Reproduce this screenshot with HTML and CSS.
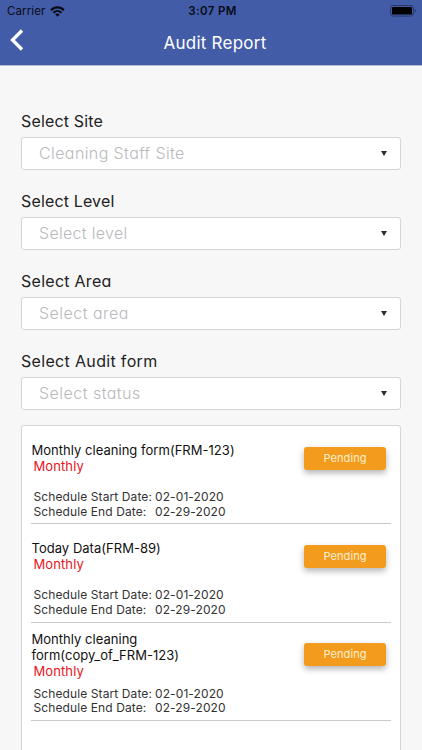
FILE: index.html
```html
<!DOCTYPE html>
<html lang="en">
<head>
<meta charset="utf-8">
<title>Audit Report</title>
<link rel="stylesheet" href="styles.css">
</head>
<body>
<header class="header">
  <div class="status">
    <div class="carrier"><span>Carrier</span>
      <svg class="wifi" width="15" height="11" viewBox="0 0 15 11"><g fill="none" stroke="#070b16" stroke-width="2.200"><path d="M1.1 4.2C4.6.5 10.4.5 13.900 4.2"/><path d="M3.5 6.7c2.3-2.3 5.7-2.3 8 0"/></g><path fill="#070b16" d="M7.5 10.7 5.2 8.400c1.3-1.2 3.3-1.2 4.6 0z"/></svg>
    </div>
    <div class="time">3:07 PM</div>
    <svg class="battery" width="27" height="12" viewBox="0 0 27 12"><rect x=".5" y=".5" width="23" height="10.6" rx="2.6" fill="none" stroke="#283666"/><rect x="2" y="2" width="20" height="7.6" rx="1.2" fill="#000"/><path fill="#283666" d="M24.8 4c1.6.6 1.6 3 0 3.6z"/></svg>
  </div>
  <div class="nav">
    <svg class="back" width="14" height="22" viewBox="0 0 14 22"><path d="M12 1.5 2.5 11l9.500 9.500" fill="none" stroke="#fff" stroke-width="3.300"/></svg>
    <h1 class="title">Audit Report</h1>
  </div>
</header>
<main class="main">
  <div class="field"><div class="label l-site">Select Site</div><div class="select"><span class="v-site">Cleaning Staff Site</span><i class="arrow"></i></div></div>
  <div class="field"><div class="label l-level">Select Level</div><div class="select"><span class="v-level">Select level</span><i class="arrow"></i></div></div>
  <div class="field"><div class="label l-area">Select Area</div><div class="select"><span class="v-area">Select area</span><i class="arrow"></i></div></div>
  <div class="field"><div class="label l-form">Select Audit form</div><div class="select"><span class="v-status">Select status</span><i class="arrow"></i></div></div>
  <section class="list">
    <article class="row">
      <div class="top"><div class="name"><div>Monthly cleaning form(FRM-123)</div><div class="freq">Monthly</div></div><div class="badge">Pending</div></div>
      <div class="dates"><span>Schedule Start Date:</span><span>02-01-2020</span><span>Schedule End Date:</span><span>02-29-2020</span></div>
    </article>
    <article class="row">
      <div class="top"><div class="name"><div>Today Data(FRM-89)</div><div class="freq">Monthly</div></div><div class="badge">Pending</div></div>
      <div class="dates"><span>Schedule Start Date:</span><span>02-01-2020</span><span>Schedule End Date:</span><span>02-29-2020</span></div>
    </article>
    <article class="row">
      <div class="top"><div class="name"><div>Monthly cleaning<br>form(copy_of_FRM-123)</div><div class="freq">Monthly</div></div><div class="badge">Pending</div></div>
      <div class="dates"><span>Schedule Start Date:</span><span>02-01-2020</span><span>Schedule End Date:</span><span>02-29-2020</span></div>
    </article>
  </section>
</main>
</body>
</html>
```
FILE: styles.css
```css
* { box-sizing: border-box; }
body {
  margin: 0;
  height: 750px;
  overflow: hidden;
  display: flex;
  flex-direction: column;
  background: #f7f7f7;
  font-family: Inter, "Liberation Sans", sans-serif;
  color: #111;
}
.header {
  flex: none;
  height: 66px;
  background: #435ca8;
  border-bottom: 1px solid #b4bbd2;
}
.status {
  height: 22px;
  padding: 0 6px 0 7px;
  display: grid;
  grid-template-columns: 1fr auto 1fr;
  align-items: center;
  color: #070b16;
  font-size: 11.500px;
  line-height: 22px;
}
.carrier { display: flex; align-items: center; gap: 5px; letter-spacing: .1px; }
.time { font-weight: 600; letter-spacing: .35px; padding-left: 2px; }
.battery { justify-self: end; margin-right: -1px; }
.nav {
  height: 43px;
  display: grid;
  grid-template-columns: 30px 1fr 30px;
  padding: 0 4px 0 10px;
}
.back { margin-top: 7px; }
.title {
  margin: 0;
  text-align: center;
  color: #fff;
  font-size: 17px;
  font-weight: 400;
  letter-spacing: .25px;
  line-height: 42px;
  padding-left: 2px;
}
.title, .label, .select { font-feature-settings: "cv11"; }
.main { flex: 1; min-height: 0; padding: 39px 21px 0; }
.field { height: 80px; padding-top: 4px; }
.label { height: 28px; line-height: 25px; font-size: 16px; color: #222; }
.l-site, .l-level { letter-spacing: .15px; }
.l-area { letter-spacing: .27px; }
.l-form { letter-spacing: .33px; }
.select {
  height: 33px;
  border: 1px solid #d6d6d6;
  border-radius: 3px;
  background: #fff;
  padding: 0 13px 0 17px;
  display: flex;
  align-items: center;
  justify-content: space-between;
  color: #b9b9bd;
  font-size: 16px;
  font-weight: 300;
  letter-spacing: .4px;
}
.select span { padding-bottom: 2px; }
.v-level { letter-spacing: .3px; }
.v-area, .v-status { letter-spacing: .47px; }
.arrow {
  width: 6px;
  height: 5px;
  background: #2b2b2b;
  clip-path: polygon(0 0, 100% 0, 50% 100%);
}
.list {
  height: 340px;
  border: 1px solid #d6d6d6;
  border-radius: 3px;
  background: #fff;
  padding: 0 9px;
}
.row { height: 98.400px; border-bottom: 1px solid #cacaca; }
.top {
  height: 64px;
  padding: 0 5px 0 .5px;
  display: flex;
  align-items: center;
  justify-content: space-between;
}
.name { font-size: 13px; line-height: 16px; letter-spacing: .03px; }
.freq { color: #e8141c; padding-left: 2px; letter-spacing: .1px; }
.badge {
  width: 82px;
  height: 23px;
  border-radius: 3px;
  background: #f39b1d;
  box-shadow: 0 3px 6px rgba(0, 0, 0, .3);
  color: #fff0d0;
  font-size: 11px;
  line-height: 23px;
  text-align: center;
  letter-spacing: .1px;
}
.dates {
  padding-left: 2.500px;
  display: grid;
  grid-template-columns: 121.500px 1fr;
  font-size: 12px;
  line-height: 14.700px;
  letter-spacing: .1px;
  color: #333;
}
```
